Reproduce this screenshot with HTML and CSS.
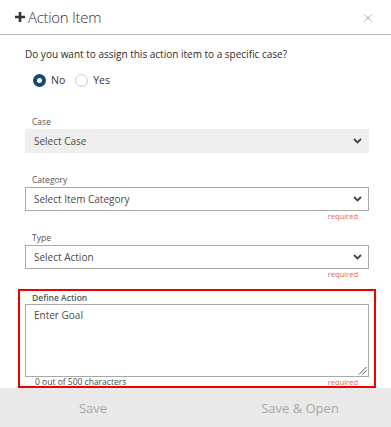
FILE: index.html
```html
<!DOCTYPE html>
<html lang="en">
  <head>
    <meta charset="UTF-8" />
    <meta name="viewport" content="width=device-width, initial-scale=1.0" />
    <title>Action Item</title>
    <link rel="stylesheet" href="styles.css">
  </head>
  <body>
    <div class="modal">
      <div class="modal-header">
        <div class="modal-title">
          <svg class="plus" width="10" height="10" viewBox="0 0 10 10">
            <path d="M3.7 0h2.6v3.7H10v2.6H6.3V10H3.7V6.3H0V3.7h3.7z" fill="#333" />
          </svg>
          <span>Action Item</span>
        </div>
        <svg class="close" width="8" height="8" viewBox="0 0 8 8">
          <path d="M0.5 0.5L7.5 7.5M7.5 0.5L0.5 7.5" stroke="#aaa" stroke-width="1" />
        </svg>
      </div>
      <div class="modal-body">
        <div class="question">Do you want to assign this action item to a specific case?</div>
        <div class="radio-group">
          <label class="radio"><span class="dot checked"></span>No</label>
          <label class="radio"><span class="dot"></span>Yes</label>
        </div>

        <div class="field field-case">
          <div class="field-label">Case</div>
          <div class="select disabled">
            <span>Select Case</span>
            <svg class="chevron" width="9" height="6" viewBox="0 0 9 6">
              <path d="M1 1L4.5 4.5L8 1" stroke="#444" stroke-width="1.8" fill="none" />
            </svg>
          </div>
        </div>

        <div class="field">
          <div class="field-label">Category</div>
          <div class="select">
            <span>Select Item Category</span>
            <svg class="chevron" width="9" height="6" viewBox="0 0 9 6">
              <path d="M1 1L4.5 4.5L8 1" stroke="#444" stroke-width="1.8" fill="none" />
            </svg>
          </div>
          <div class="required">required</div>
        </div>

        <div class="field">
          <div class="field-label">Type</div>
          <div class="select">
            <span>Select Action</span>
            <svg class="chevron" width="9" height="6" viewBox="0 0 9 6">
              <path d="M1 1L4.5 4.5L8 1" stroke="#444" stroke-width="1.8" fill="none" />
            </svg>
          </div>
          <div class="required">required</div>
        </div>

        <div class="highlight">
          <div class="field-label bold">Define Action</div>
          <div class="textarea">
            <span>Enter Goal</span>
            <svg class="grip" width="9" height="9" viewBox="0 0 9 9">
              <path d="M8.5 1L1 8.5M8.5 4.5L4.5 8.5" stroke="#555" stroke-width="1" />
            </svg>
          </div>
          <div class="textarea-foot">
            <span class="count">0 out of 500 characters</span>
            <span class="required inline">required</span>
          </div>
        </div>
      </div>
      <div class="modal-footer">
        <button class="footer-btn">Save</button>
        <button class="footer-btn">Save &amp; Open</button>
      </div>
    </div>
  </body>
</html>
```

FILE: styles.css
```css
body {
  margin: 0;
  font-family: "Open Sans", Arial, sans-serif;
  color: #333;
  background: #fff;
}
.modal {
  width: 391px;
  height: 427px;
  display: flex;
  flex-direction: column;
}
.modal-header {
  height: 34px;
  flex-shrink: 0;
  border-bottom: 1px solid #b5b5b5;
  display: flex;
  align-items: center;
  justify-content: space-between;
  padding: 0 19px 0 15px;
}
.modal-title {
  display: flex;
  align-items: center;
  gap: 3px;
}
.modal-title span {
  font-size: 15px;
  font-weight: 300;
  letter-spacing: -0.3px;
  color: #333;
}
.close {
  margin-top: 1px;
}
.modal-body {
  flex: 1;
  padding: 12px 22px 0 25px;
}
.question {
  font-size: 10px;
  color: #2b2b2b;
  line-height: 14px;
}
.radio-group {
  display: flex;
  gap: 10px;
  margin: 12px 0 0 8px;
  height: 14px;
}
.radio {
  display: flex;
  align-items: center;
  gap: 5px;
  font-size: 10.5px;
  color: #333;
}
.dot {
  width: 13px;
  height: 13px;
  border-radius: 50%;
  border: 1px solid #c8c8c8;
  box-sizing: border-box;
  background: #fff;
}
.dot.checked {
  border: 4.5px solid #164a76;
  background: #fff;
}
.field-case {
  margin-top: 28px;
  margin-bottom: 20px;
}
.field-label {
  font-size: 8.5px;
  color: #555;
  padding-left: 7px;
  line-height: 14px;
  height: 14px;
}
.field-label.bold {
  font-weight: 600;
  color: #555;
  line-height: 12px;
  height: 12px;
  padding-top: 1px;
  padding-left: 7px;
}
.select {
  height: 24px;
  box-sizing: border-box;
  border: 1px solid #a9a9a9;
  display: flex;
  align-items: center;
  justify-content: space-between;
  padding: 0 6px 0 8px;
  font-size: 10px;
  color: #4a4a4a;
}
.select.disabled {
  background: #eeeeee;
  border-color: #eeeeee;
}
.required {
  font-size: 7.5px;
  color: #e06666;
  text-align: right;
  padding-right: 11px;
  line-height: 11px;
  height: 13px;
  margin-bottom: 7px;
}
.highlight {
  margin: 0 -7px;
  border: 2px solid #f00000;
  padding: 0 5px;
  height: 99px;
  box-sizing: border-box;
}
.textarea {
  height: 73px;
  border: 1px solid #a9a9a9;
  position: relative;
  padding: 3px 8px;
  box-sizing: border-box;
  font-size: 10px;
  color: #4a4a4a;
}
.grip {
  position: absolute;
  right: 1px;
  bottom: 1px;
}
.textarea-foot {
  display: flex;
  justify-content: space-between;
  padding: 0 11px 0 10px;
  line-height: 10px;
}
.count {
  font-size: 8.5px;
  color: #4a4a4a;
}
.required.inline {
  padding: 0;
  margin: 0;
  height: auto;
  line-height: 10px;
}
.modal-footer {
  height: 39px;
  flex-shrink: 0;
  background: #e9e9e9;
  display: flex;
  justify-content: space-between;
  padding: 0 16px 0 18px;
}
.footer-btn {
  width: 150px;
  border: none;
  background: transparent;
  font-family: "Open Sans", Arial, sans-serif;
  font-size: 13px;
  color: #a8a8a8;
  padding: 0;
}
```
